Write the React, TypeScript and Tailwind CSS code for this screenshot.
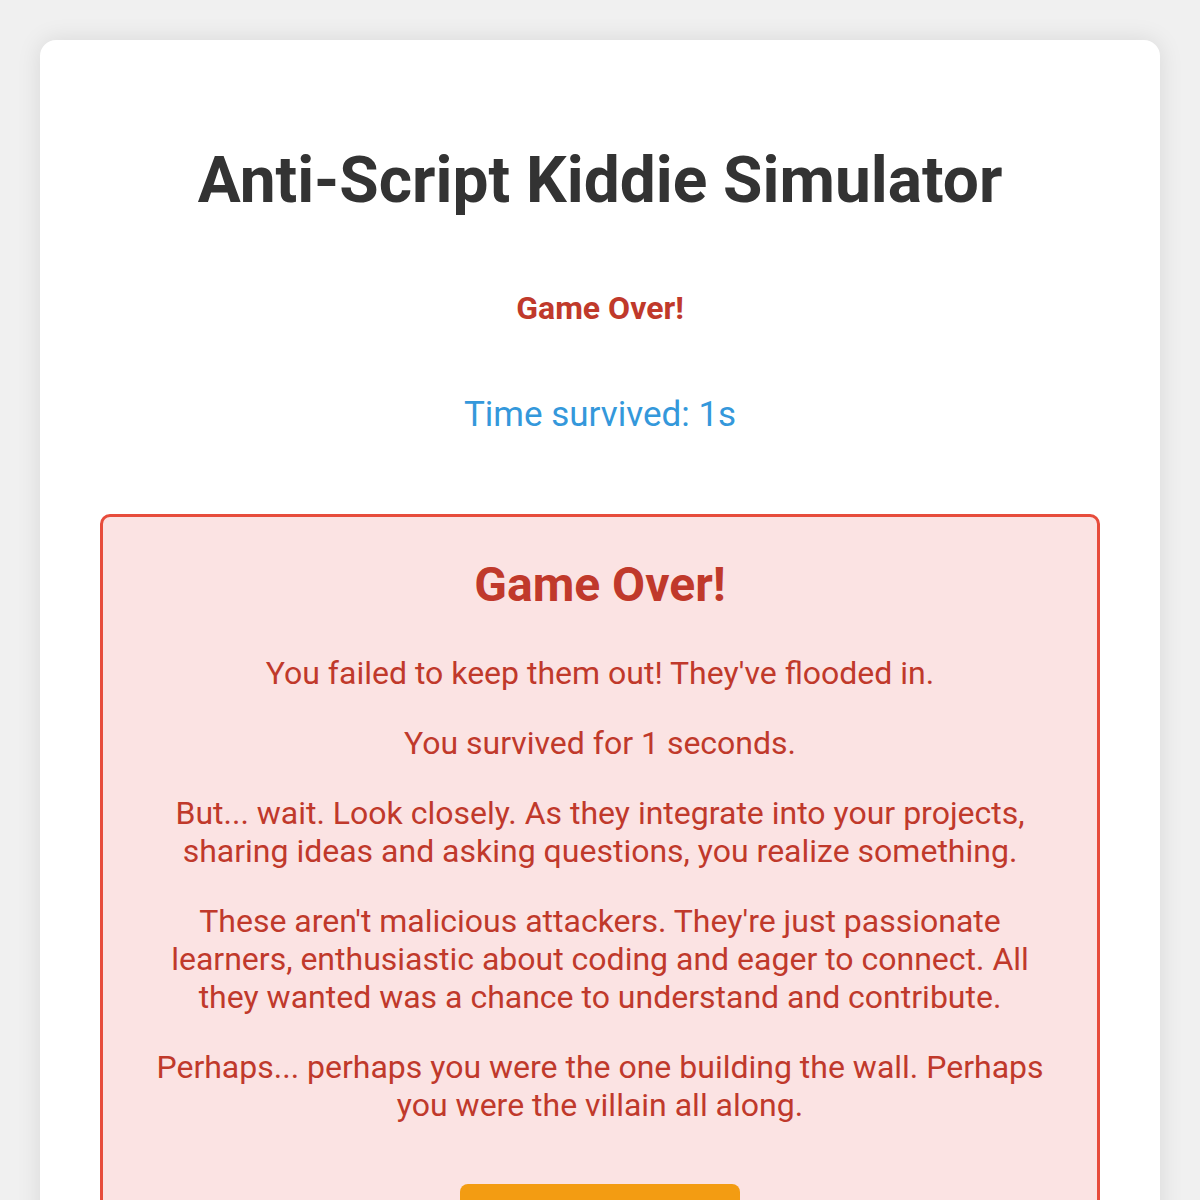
import React from 'react';

const paragraphs = [
    "You failed to keep them out! They've flooded in.",
    'You survived for 1 seconds.',
    'But... wait. Look closely. As they integrate into your projects, sharing ideas and asking questions, you realize something.',
    "These aren't malicious attackers. They're just passionate learners, enthusiastic about coding and eager to connect. All they wanted was a chance to understand and contribute.",
    'Perhaps... perhaps you were the one building the wall. Perhaps you were the villain all along.',
];

export default function App() {
    return (
        <div className="min-h-[1200px] bg-[#f0f0f0] p-10 font-['Roboto',sans-serif]">
            <div className="rounded-2xl bg-white px-[60px] pt-[103px] pb-10 text-center shadow-[0_0_24px_rgba(0,0,0,0.1)]">
                <h1 className="text-[64px] font-bold leading-[1.2] text-[#333]">
                    Anti-Script Kiddie Simulator
                </h1>

                <div className="mt-[69px] text-[32px] font-bold leading-[1.2] text-[#c0392b]">Game Over!</div>

                <div className="mt-[67px] text-[35px] leading-[1.2] text-[#3498db]">Time survived: 1s</div>

                {/* Game over box */}
                <div className="mt-[78px] rounded-[10px] border-[3px] border-[#e74c3c] bg-[#fbe3e3] px-10 pt-[39px] pb-10 text-[#c0392b]">
                    <h2 className="text-[48px] font-bold leading-[1.2] mb-10">Game Over!</h2>
                    {paragraphs.map((p) => (
                        <p key={p} className="text-[32px] leading-[38px] mb-8">
                            {p}
                        </p>
                    ))}
                    <button className="mt-[28px] w-[280px] rounded-lg bg-[#f39c12] px-6 pt-5 pb-4 text-[30px] font-bold leading-[1.2] text-white">
                        Play Again
                    </button>
                </div>
            </div>
        </div>
    );
}
